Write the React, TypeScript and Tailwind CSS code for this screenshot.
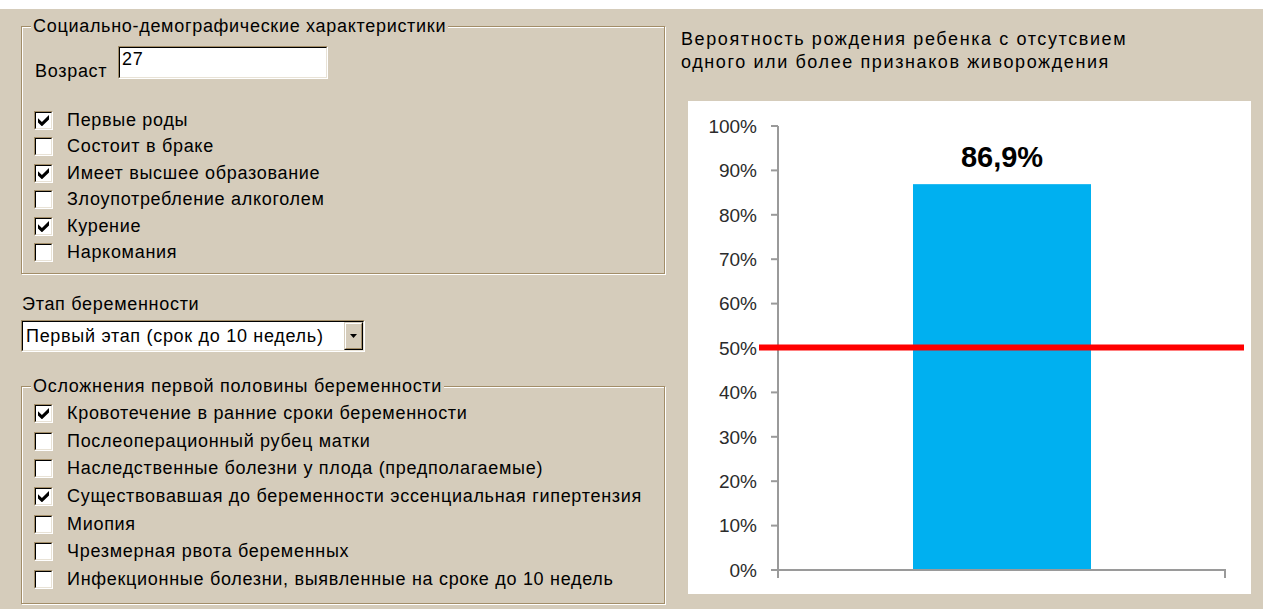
import type { ReactNode } from "react";

// Windows classic "Desert" palette
// face #d5ccbb, shadow #a28d68, light #e8e2d6

const Check = ({ on }: { on?: boolean }) => (
  <span className="w-[19px] h-[19px] shrink-0 flex border border-t-[#a28d68] border-l-[#a28d68] border-b-white border-r-white">
    <span className="flex-1 flex items-center justify-center bg-white border border-t-black border-l-black border-b-[#e8e2d6] border-r-[#e8e2d6]">
      {on && (
        <svg width="11" height="11" viewBox="0 0 7 7">
          <polygon points="0,2 2.5,4.4 7,0 7,2.8 2.5,7.2 0,4.8" fill="#000" />
        </svg>
      )}
    </span>
  </span>
);

const CheckRow = ({ label, on, h }: { label: string; on?: boolean; h: string }) => (
  <div className={`flex items-center gap-[14px] ${h}`}>
    <Check on={on} />
    <span className="whitespace-nowrap">{label}</span>
  </div>
);

const GroupBox = ({ title, className, children }: { title: string; className: string; children: ReactNode }) => (
  <div
    className={`w-[644px] border border-[#a28d68] shadow-[inset_1px_1px_0_#ffffff,1px_1px_0_#ffffff] pl-[12px] ${className}`}
  >
    <div className="-mt-[11px] -ml-[3px] px-[2px] w-fit h-[20px] bg-[#d5ccbb] whitespace-nowrap">{title}</div>
    {children}
  </div>
);

const Sunken = ({ className, children }: { className: string; children: ReactNode }) => (
  <div className={`flex border border-t-[#a28d68] border-l-[#a28d68] border-b-white border-r-white ${className}`}>
    <div className="flex-1 flex bg-white border border-t-black border-l-black border-b-[#e8e2d6] border-r-[#e8e2d6]">
      {children}
    </div>
  </div>
);

const social = [
  { label: "Первые роды", on: true },
  { label: "Состоит в браке" },
  { label: "Имеет высшее образование", on: true },
  { label: "Злоупотребление алкоголем" },
  { label: "Курение", on: true },
  { label: "Наркомания" },
];

const complications = [
  { label: "Кровотечение в ранние сроки беременности", on: true },
  { label: "Послеоперационный рубец матки" },
  { label: "Наследственные болезни у плода (предполагаемые)" },
  { label: "Существовавшая до беременности эссенциальная гипертензия", on: true },
  { label: "Миопия" },
  { label: "Чрезмерная рвота беременных" },
  { label: "Инфекционные болезни, выявленные на сроке до 10 недель" },
];

const Chart = ({ value }: { value: number }) => {
  const zero = 469;
  const step = 44.4;
  const barTop = zero - value * step * 10;
  const ticks = Array.from({ length: 11 }, (_, i) => i);
  return (
    <svg width="563" height="493" className="tracking-normal" fontFamily="'Liberation Sans', Arial, sans-serif">
      <rect x="225" y={barTop} width="178" height={zero - barTop} fill="#00b0f0" />
      <line x1="90" y1="25" x2="90" y2="477" stroke="#9a9a9a" strokeWidth="2" />
      <line x1="83" y1={zero} x2="538" y2={zero} stroke="#9a9a9a" strokeWidth="2" />
      <line x1="537" y1={zero} x2="537" y2="477" stroke="#9a9a9a" strokeWidth="2" />
      {ticks.map((i) => {
        const y = zero - i * step;
        return (
          <g key={i}>
            <line x1="83" y1={y} x2="90" y2={y} stroke="#9a9a9a" strokeWidth="2" />
            <text x="69" y={y + 6.8} textAnchor="end" fontSize="19" fill="#2b2b2b">
              {i * 10}%
            </text>
          </g>
        );
      })}
      <rect x="71" y="243.5" width="485" height="6" fill="#ff0000" />
      <text x="314" y="66" textAnchor="middle" fontSize="29" fontWeight="bold" fill="#000">
        {(value * 100).toFixed(1).replace(".", ",")}%
      </text>
    </svg>
  );
};

export default function App() {
  return (
    <div className="w-[1263px] h-[609px] overflow-hidden bg-[#d5ccbb] border-t-[9px] border-white flex font-['Liberation_Sans',Arial,sans-serif] text-[18px] leading-[21px] tracking-[0.7px] text-black">
      {/* left: form */}
      <div className="w-[666px] shrink-0 pl-[21px] flex flex-col">
        <GroupBox title="Социально-демографические характеристики" className="mt-[17px] h-[248px]">
          <div className="flex items-start mt-[10px]">
            <span className="mt-[15px] ml-[1px] w-[83px]">Возраст</span>
            <Sunken className="w-[210px] h-[33px]">
              <span className="pl-[2px] pt-[1px]">27</span>
            </Sunken>
          </div>
          <div className="mt-[25px]">
            {social.map((r) => (
              <CheckRow key={r.label} label={r.label} on={r.on} h="h-[26.5px]" />
            ))}
          </div>
        </GroupBox>

        <div className="mt-[20px] ml-[1px]">Этап беременности</div>
        <Sunken className="mt-[5px] w-[344px] h-[32px]">
          <span className="flex-1 self-center pl-[3px] whitespace-nowrap">Первый этап (срок до 10 недель)</span>
          <div className="w-[19px] flex border border-t-[#d5ccbb] border-l-[#d5ccbb] border-b-black border-r-black">
            <div className="flex-1 flex items-center justify-center bg-[#d5ccbb] border border-t-white border-l-white border-b-[#a28d68] border-r-[#a28d68]">
              <svg width="7" height="4" viewBox="0 0 7 4">
                <polygon points="0,0 7,0 3.5,4" fill="#000" />
              </svg>
            </div>
          </div>
        </Sunken>

        <GroupBox title="Осложнения первой половины беременности" className="mt-[34px] h-[218px]">
          <div className="mt-[4px]">
            {complications.map((r) => (
              <CheckRow key={r.label} label={r.label} on={r.on} h="h-[27.6px]" />
            ))}
          </div>
        </GroupBox>
      </div>

      {/* right: result chart */}
      <div className="flex-1 pl-[15px] pt-[19px] flex flex-col">
        <div className="leading-[23px] tracking-[1.6px]">
          <div className="whitespace-nowrap">Вероятность рождения ребенка с отсутсвием</div>
          <div className="whitespace-nowrap">одного или более признаков живорождения</div>
        </div>
        <div className="mt-[27px] ml-[7px] w-[563px] h-[493px] bg-white">
          <Chart value={0.869} />
        </div>
      </div>
    </div>
  );
}
